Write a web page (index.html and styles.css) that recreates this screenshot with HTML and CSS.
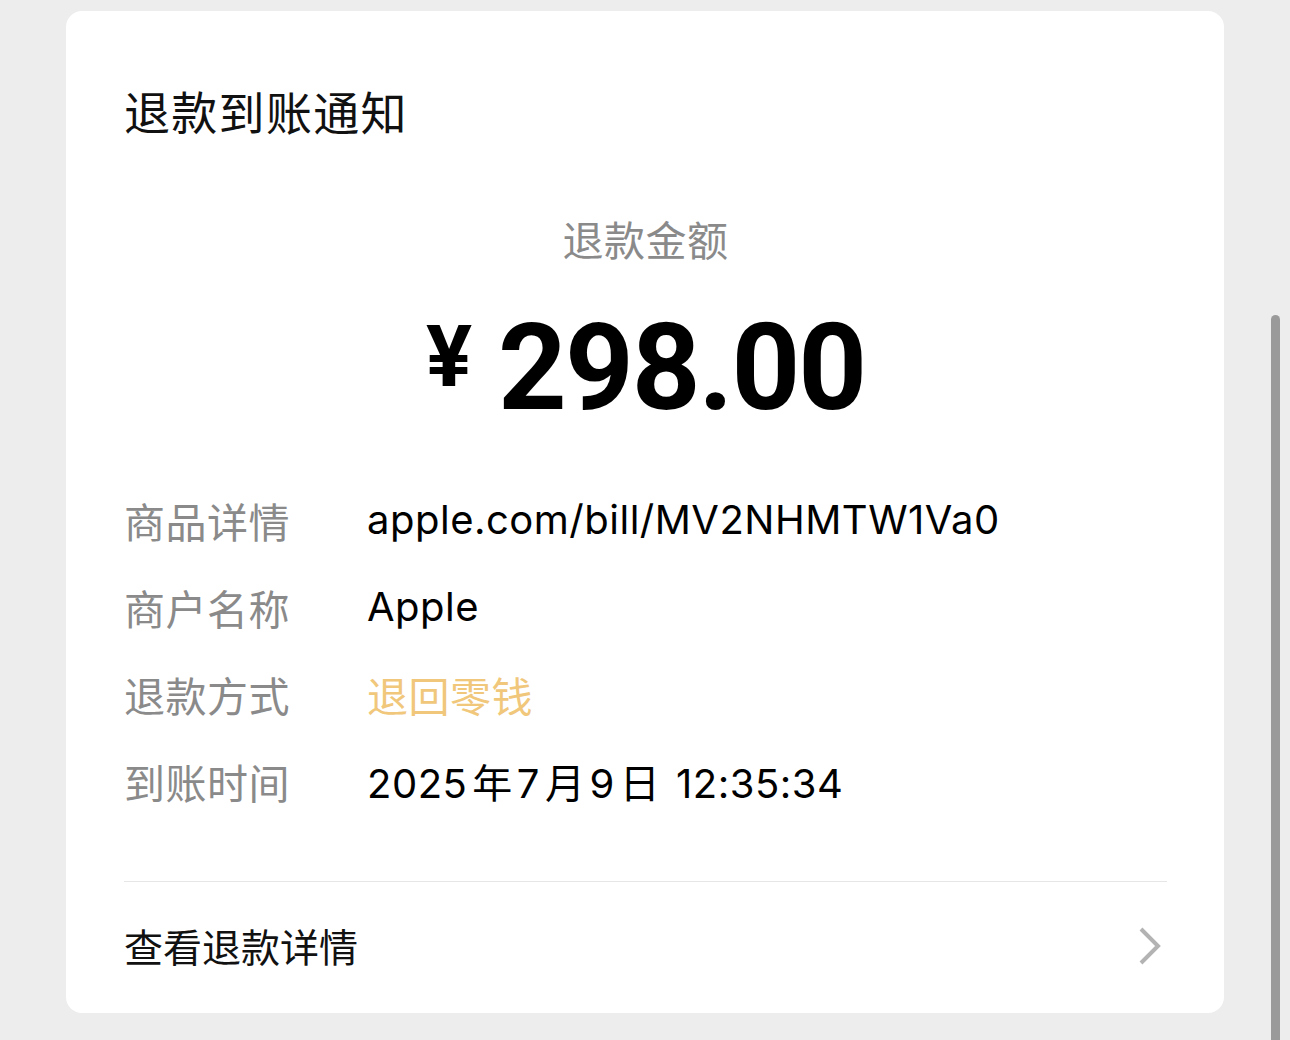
FILE: index.html
```html
<!DOCTYPE html>
<html lang="zh-CN">
<head>
<meta charset="utf-8">
<title>退款到账通知</title>
<link rel="stylesheet" href="styles.css">
</head>
<body>
<div class="page">
  <div class="card">
    <h1 class="title">退款到账通知</h1>
    <div class="amount-label">退款金额</div>
    <div class="amount"><span class="yen">¥</span><span class="num">298.00</span></div>
    <div class="rows">
      <div class="row"><span class="label">商品详情</span><span class="value">apple.com/bill/MV2NHMTW1Va0</span></div>
      <div class="row"><span class="label">商户名称</span><span class="value">Apple</span></div>
      <div class="row"><span class="label">退款方式</span><span class="value gold">退回零钱</span></div>
      <div class="row"><span class="label">到账时间</span><span class="value">2025<span class="cj">年</span>7<span class="cj">月</span>9<span class="cj">日</span> 12:35:34</span></div>
    </div>
    <div class="divider"></div>
    <div class="footer">
      <span class="footer-text">查看退款详情</span>
      <svg class="chevron" width="26" height="40" viewBox="0 0 26 40"><path d="M4 3 L21 20 L4 37" fill="none" stroke="#b3b3b3" stroke-width="4"/></svg>
    </div>
  </div>
  <div class="scrollbar"></div>
</div>
</body>
</html>
```
FILE: styles.css
```css
html, body {
  margin: 0;
  padding: 0;
  background: #ededed;
  overflow: hidden;
}
body {
  font-family: Inter, "Noto Sans CJK SC", sans-serif;
  width: 1290px;
  height: 1040px;
}
.page {
  position: relative;
  width: 1290px;
  height: 1040px;
  padding: 11px 0 0 66px;
  box-sizing: border-box;
}
.card {
  width: 1158px;
  height: 1002px;
  background: #fff;
  border-radius: 16px;
  box-sizing: border-box;
  padding: 69px 57px 0 58px;
  display: flex;
  flex-direction: column;
}
.title {
  margin: 0;
  font-family: "Noto Sans CJK SC", sans-serif;
  font-weight: 400;
  font-size: 46px;
  letter-spacing: 1.3px;
  line-height: 60px;
  color: #111;
}
.amount-label {
  margin-top: 68px;
  text-align: center;
  font-family: "Noto Sans CJK SC", sans-serif;
  font-size: 41px;
  letter-spacing: 0.5px;
  line-height: 60px;
  color: #8a8a8a;
}
.amount {
  margin-top: 35px;
  height: 130px;
  display: flex;
  justify-content: center;
  align-items: center;
  color: #000;
  font-family: Roboto, sans-serif;
  font-weight: 700;
}
.yen {
  font-size: 86px;
  line-height: 1;
  margin-right: 26px;
  margin-top: -22px;
}
.num {
  font-size: 120px;
  line-height: 130px;
  letter-spacing: -2px;
}
.rows {
  margin-top: 43px;
  display: flex;
  flex-direction: column;
}
.row {
  display: flex;
  align-items: center;
  height: 87px;
}
.label {
  width: 243px;
  flex: none;
  font-family: "Noto Sans CJK SC", sans-serif;
  font-size: 41px;
  color: #8a8a8a;
  letter-spacing: 0.5px;
}
.value {
  font-size: 40px;
  letter-spacing: 0.5px;
  color: #000;
}
.cj {
  margin: 0 4px 0 5px;
}
.gold {
  font-family: "Noto Sans CJK SC", sans-serif;
  font-size: 41px;
  color: #f0c77b;
}
.divider {
  margin-top: 57px;
  height: 1px;
  background: #e6e6e6;
}
.footer {
  height: 131px;
  box-sizing: border-box;
  padding-bottom: 5px;
  display: flex;
  align-items: center;
  justify-content: space-between;
}
.footer-text {
  font-family: "Noto Sans CJK SC", sans-serif;
  font-size: 39px;
  color: #111;
}
.chevron {
  margin-right: 4px;
  margin-top: 2px;
}
.scrollbar {
  position: absolute;
  left: 1271px;
  top: 315px;
  width: 9px;
  height: 740px;
  background: #9a9a9a;
  border-radius: 5px;
}
```
